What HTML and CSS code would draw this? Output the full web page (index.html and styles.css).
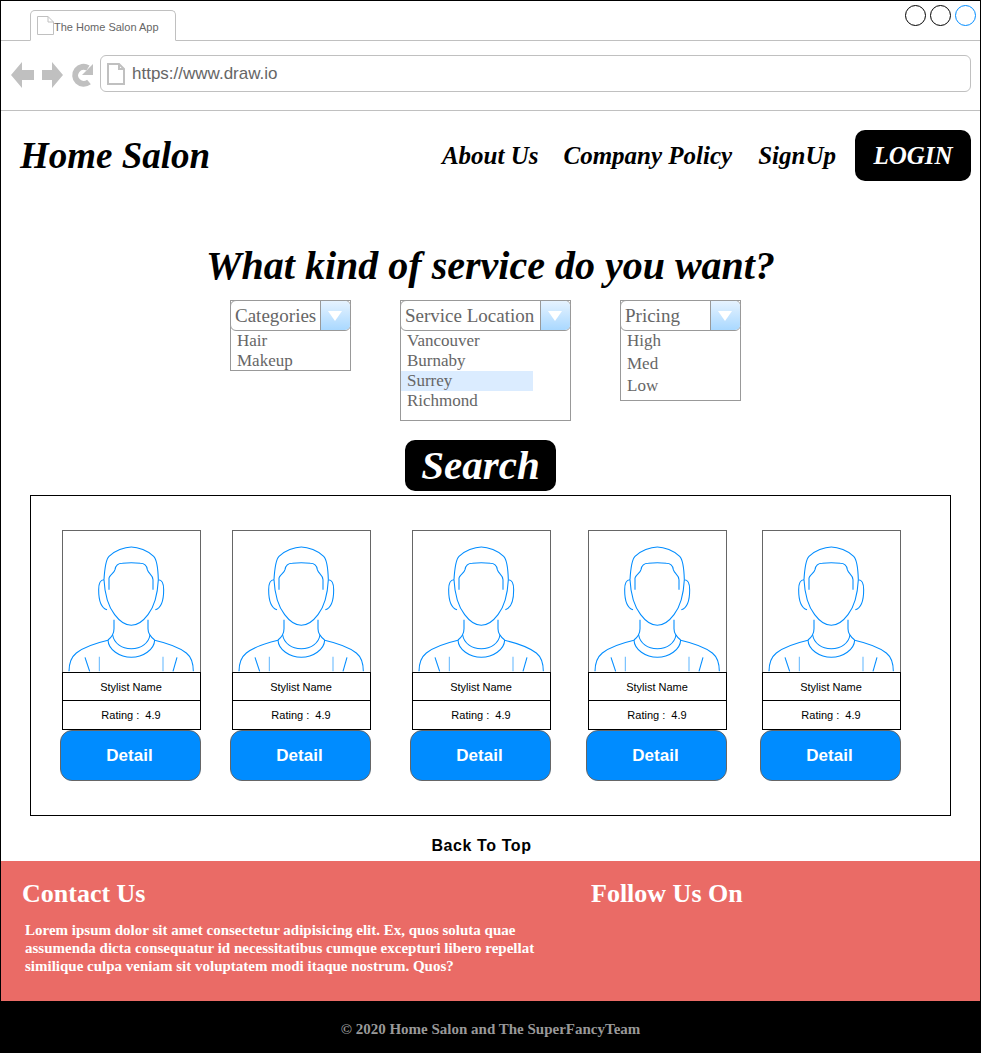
FILE: index.html
```html
<!DOCTYPE html>
<html lang="en">
<head>
    <meta charset="UTF-8">
    <title>The Home Salon App</title>
    <link rel="stylesheet" href="styles.css">
</head>
<body>

<svg class="defs" width="0" height="0">
    <symbol id="person" viewBox="40 19 411 423">
        <g fill="none" stroke="#008cff" stroke-width="3.2">
            <path d="M163 165 C165 130 168 105 178 95 C195 78 225 67 245 67 C265 67 295 78 312 95 C322 105 325 130 326 165"/>
            <path d="M163 165 C165 205 172 240 195 270 C210 290 228 302 245 302 C262 302 280 290 295 270 C318 240 324 205 326 165"/>
            <path d="M178 195 L178 160 C180 150 194 145 196 135 C198 122 204 116 218 116 C235 114 255 114 272 116 C286 116 291 122 293 135 C296 147 310 150 310 165 L310 195"/>
            <path d="M163 165 C150 165 147 178 147 195 C147 225 155 250 172 255"/>
            <path d="M326 165 C339 165 342 178 342 195 C342 225 334 250 317 255"/>
            <path d="M193 285 L193 312 C193 325 185 338 175 346"/>
            <path d="M295 285 L295 312 C295 325 305 338 315 346"/>
            <path d="M175 346 C176 375 210 398 245 398 C280 398 314 375 315 346"/>
            <path d="M189 331 C193 355 215 372 245 372 C275 372 297 355 301 331"/>
            <path d="M175 347 C140 355 100 370 80 385 C65 397 58 420 58 440"/>
            <path d="M315 347 C350 355 390 370 410 385 C425 397 431 420 431 440"/>
            <path d="M106 398 L120 440"/>
            <path d="M382 398 L370 440"/>
            <path d="M149 396 L149 440" stroke="#66baff"/>
            <path d="M340 396 L340 440" stroke="#66baff"/>
        </g>
    </symbol>
</svg>

<div class="frame">

    <div class="tabbar">
        <div class="tab">
            <svg class="tab-doc" width="17" height="19" viewBox="0 0 17 19">
                <path d="M.5 .5 H11 L16.5 6 V18.5 H.5 Z M11 .5 V6 H16.5" fill="#fff" stroke="#c0c0c0"/>
            </svg>
            <span>The Home Salon App</span>
        </div>
        <div class="dots">
            <span class="dot"></span>
            <span class="dot"></span>
            <span class="dot blue"></span>
        </div>
    </div>

    <div class="urlbar">
        <svg class="nav-icons" width="84" height="26" viewBox="0 0 84 26">
            <path d="M0 13 L11 0 V8 H23 V18 H11 V26 Z" fill="#c0c0c0"/>
            <path d="M31 8 H41 V0 L52 13 L41 26 V18 H31 Z" fill="#c0c0c0"/>
            <path d="M78 20 A8.5 8.5 0 1 1 77 6" fill="none" stroke="#c0c0c0" stroke-width="6"/>
            <path d="M82 2 V13 H71 Z" fill="#c0c0c0"/>
        </svg>
        <div class="url">
            <svg width="18" height="22" viewBox="0 0 18 22">
                <path d="M1 1 H12 L17 6 V21 H1 Z M12 1 V6 H17" fill="#fff" stroke="#c0c0c0" stroke-width="2"/>
            </svg>
            <span>https://www.draw.io</span>
        </div>
    </div>

    <header class="top">
        <div class="brand">Home Salon</div>
        <nav class="menu">
            <a class="about">About Us</a>
            <a class="policy">Company Policy</a>
            <a class="signup">SignUp</a>
            <a class="login">LOGIN</a>
        </nav>
    </header>

    <h1>What kind of service do you want?</h1>

    <div class="filters">
        <div class="drop drop-cat">
            <div class="drop-head"><span>Categories</span><i></i></div>
            <ul>
                <li>Hair</li>
                <li>Makeup</li>
            </ul>
        </div>
        <div class="drop drop-loc">
            <div class="drop-head"><span>Service Location</span><i></i></div>
            <ul>
                <li>Vancouver</li>
                <li>Burnaby</li>
                <li class="active">Surrey</li>
                <li>Richmond</li>
            </ul>
        </div>
        <div class="drop drop-price">
            <div class="drop-head"><span>Pricing</span><i></i></div>
            <ul>
                <li>High</li>
                <li>Med</li>
                <li>Low</li>
            </ul>
        </div>
    </div>

    <div class="search-row"><a class="search">Search</a></div>

    <section class="results">
        <div class="card c1">
            <div class="photo"><svg><use href="#person"/></svg></div>
            <div class="row">Stylist Name</div>
            <div class="row">Rating :&nbsp; 4.9</div>
            <a class="detail">Detail</a>
        </div>
        <div class="card c2">
            <div class="photo"><svg><use href="#person"/></svg></div>
            <div class="row">Stylist Name</div>
            <div class="row">Rating :&nbsp; 4.9</div>
            <a class="detail">Detail</a>
        </div>
        <div class="card c3">
            <div class="photo"><svg><use href="#person"/></svg></div>
            <div class="row">Stylist Name</div>
            <div class="row">Rating :&nbsp; 4.9</div>
            <a class="detail">Detail</a>
        </div>
        <div class="card c4">
            <div class="photo"><svg><use href="#person"/></svg></div>
            <div class="row">Stylist Name</div>
            <div class="row">Rating :&nbsp; 4.9</div>
            <a class="detail">Detail</a>
        </div>
        <div class="card c5">
            <div class="photo"><svg><use href="#person"/></svg></div>
            <div class="row">Stylist Name</div>
            <div class="row">Rating :&nbsp; 4.9</div>
            <a class="detail">Detail</a>
        </div>
    </section>

    <div class="backtop">Back To Top</div>

    <footer class="contact">
        <div class="contact-left">
            <h2>Contact Us</h2>
            <p>Lorem ipsum dolor sit amet consectetur adipisicing elit. Ex, quos soluta quae assumenda dicta consequatur id necessitatibus cumque excepturi libero repellat similique culpa veniam sit voluptatem modi itaque nostrum. Quos?</p>
        </div>
        <div class="contact-right">
            <h2>Follow Us On</h2>
        </div>
    </footer>

    <div class="copyright">© 2020 Home Salon and The SuperFancyTeam</div>

</div>

</body>
</html>
```

FILE: styles.css
```css
body {
    margin: 0;
    background-color: #fff;
    font-family: "Liberation Serif", serif;
}
.defs {
    position: absolute;
}
.frame {
    width: 981px;
    height: 1053px;
    box-sizing: border-box;
    border: 1px solid #000;
    border-bottom: none;
    overflow: hidden;
}

/* browser chrome */
.tabbar {
    height: 40px;
    box-sizing: border-box;
    border-bottom: 1px solid #c0c0c0;
    display: flex;
    justify-content: space-between;
    padding: 4px 4px 0 29px;
}
.tab {
    width: 146px;
    height: 31px;
    margin-top: 5px;
    box-sizing: border-box;
    border: 1px solid #c0c0c0;
    border-bottom: 1px solid #fff;
    border-radius: 5px 5px 0 0;
    background-color: #fff;
    display: flex;
    align-items: center;
    padding: 0 0 0 6px;
    font-family: "Liberation Sans", sans-serif;
    font-size: 11px;
    color: #666;
}
.tab span {
    padding-top: 2px;
}
.dots {
    display: flex;
    gap: 4px;
    height: 21px;
}
.dot {
    width: 21px;
    height: 21px;
    box-sizing: border-box;
    border: 1px solid #000;
    border-radius: 50%;
}
.dot.blue {
    border-color: #008cff;
}
.urlbar {
    height: 70px;
    box-sizing: border-box;
    border-bottom: 1px solid #c0c0c0;
    display: flex;
    align-items: flex-start;
    padding: 14px 9px 0 10px;
}
.nav-icons {
    margin: 7px 5px 0 0;
    flex: none;
}
.url {
    flex: 1;
    height: 37px;
    box-sizing: border-box;
    border: 1px solid #c0c0c0;
    border-radius: 6px;
    display: flex;
    align-items: center;
    gap: 7px;
    padding-left: 6px;
    font-family: "Liberation Sans", sans-serif;
    font-size: 17px;
    color: #666;
}

/* header */
.top {
    display: flex;
    justify-content: space-between;
    align-items: center;
    height: 70px;
    margin-top: 9px;
    padding: 0 9px 0 19px;
    font-weight: bold;
    font-style: italic;
    color: #000;
}
.brand {
    font-size: 37px;
}
.menu {
    display: flex;
    align-items: center;
    font-size: 25px;
}
.menu a {
    padding-top: 2px;
}
.about {
    margin-right: 25px;
}
.policy {
    margin-right: 26px;
}
.signup {
    margin-right: 19px;
}
.login {
    width: 116px;
    height: 51px;
    box-sizing: border-box;
    background-color: #000;
    color: #fff;
    border-radius: 10px;
    display: flex;
    align-items: center;
    justify-content: center;
}
h1 {
    margin: 51px 0 0 0;
    text-align: center;
    font-size: 40px;
    line-height: 50px;
    font-weight: bold;
    font-style: italic;
}

/* dropdowns */
.filters {
    display: flex;
    align-items: flex-start;
    margin-top: 9px;
    padding-left: 229px;
}
.drop {
    box-sizing: border-box;
    border: 1px solid #999;
    color: #666;
}
.drop-cat {
    width: 121px;
    height: 71px;
    margin-right: 49px;
}
.drop-loc {
    width: 171px;
    height: 121px;
    margin-right: 49px;
}
.drop-price {
    width: 121px;
    height: 101px;
}
.drop-head {
    height: 31px;
    margin: -1px -1px 0 -1px;
    display: flex;
    justify-content: space-between;
    box-sizing: border-box;
    border: 1px solid #999;
    border-radius: 6px;
    background-color: #fff;
    font-size: 19px;
    line-height: 29px;
    padding-left: 4px;
    white-space: nowrap;
}
.drop-head i {
    width: 30px;
    height: 29px;
    flex: none;
    box-sizing: border-box;
    border-left: 1px solid #999;
    border-radius: 0 5px 5px 0;
    background: linear-gradient(#e6f3ff, #a9d8ff);
    position: relative;
}
.drop-head i::after {
    content: "";
    position: absolute;
    left: 7px;
    top: 10px;
    border-left: 7px solid transparent;
    border-right: 7px solid transparent;
    border-top: 10px solid #fff;
}
.drop ul {
    list-style: none;
    margin: 0;
    padding: 0;
    font-size: 17px;
    line-height: 20px;
}
.drop li {
    padding-left: 6px;
}
.drop li.active {
    width: 132px;
    box-sizing: border-box;
    background-color: #dbecff;
}
.drop-price ul {
    margin-top: -1px;
    line-height: 22.5px;
}

/* search */
.search-row {
    display: flex;
    justify-content: center;
    margin-top: 19px;
    height: 51px;
}
.search {
    width: 151px;
    height: 51px;
    margin-right: 20px;
    background-color: #000;
    color: #fff;
    border-radius: 10px;
    font-size: 41px;
    line-height: 50px;
    font-weight: bold;
    font-style: italic;
    text-align: center;
}

/* results */
.results {
    width: 921px;
    height: 321px;
    box-sizing: border-box;
    margin: 4px 0 0 29px;
    border: 1px solid #000;
    display: flex;
    align-items: flex-start;
    padding: 34px 0 0 29px;
    font-family: "Liberation Sans", sans-serif;
}
.card {
    width: 141px;
    flex: none;
}
.c2 {
    margin-left: 29px;
}
.c3 {
    margin-left: 39px;
}
.c4 {
    margin-left: 35px;
}
.c5 {
    margin-left: 33px;
}
.photo {
    width: 139px;
    height: 142px;
    margin-left: 2px;
    box-sizing: border-box;
    border: 1px solid #666;
    border-bottom: none;
}
.photo svg {
    display: block;
    width: 137px;
    height: 141px;
}
.row {
    width: 139px;
    height: 29px;
    margin-left: 2px;
    padding-right: 1px;
    box-sizing: border-box;
    border: 1px solid #000;
    font-size: 11px;
    line-height: 29px;
    text-align: center;
    color: #000;
}
.row + .row {
    border-top: none;
}
.detail {
    display: block;
    width: 141px;
    height: 51px;
    box-sizing: border-box;
    padding-right: 2px;
    background-color: #008cff;
    border: 1px solid #666;
    border-radius: 12px;
    color: #fff;
    font-size: 17px;
    font-weight: bold;
    line-height: 49px;
    text-align: center;
}

/* back to top */
.backtop {
    height: 45px;
    text-align: center;
    font-family: "Liberation Sans", sans-serif;
    font-size: 16px;
    font-weight: bold;
    letter-spacing: .6px;
    line-height: 60px;
    margin-right: 18px;
    color: #000;
}

/* footer */
.contact {
    height: 140px;
    margin-right: -1px;
    background-color: #ea6b66;
    color: #fff;
    display: flex;
}
.contact-left {
    width: 590px;
    box-sizing: border-box;
    padding: 17px 0 0 21px;
}
.contact-right {
    padding-top: 17px;
}
.contact h2 {
    margin: 0;
    font-size: 26px;
    line-height: 32px;
    font-weight: bold;
}
.contact p {
    margin: 11px 0 0 3px;
    width: 520px;
    font-size: 15px;
    line-height: 18px;
    font-weight: bold;
}
.copyright {
    height: 52px;
    background-color: #000;
    color: #999;
    text-align: center;
    font-size: 15px;
    font-weight: bold;
    line-height: 56px;
}
```
